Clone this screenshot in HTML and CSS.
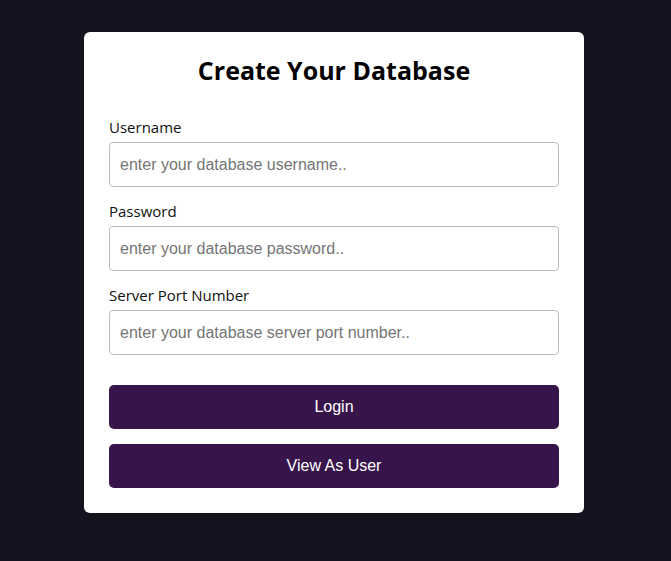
FILE: index.html
```html
<!DOCTYPE html>
<html lang="en">
<head>
<meta charset="utf-8">
<title>Create Your Database</title>
<link rel="stylesheet" href="styles.css">
</head>
<body>
<main class="page">
  <form class="card">
    <h1 class="title">Create Your Database</h1>
    <div class="field">
      <label class="label" for="u">Username</label>
      <input class="input" id="u" type="text" placeholder="enter your database username..">
    </div>
    <div class="field">
      <label class="label" for="p">Password</label>
      <input class="input" id="p" type="password" placeholder="enter your database password..">
    </div>
    <div class="field">
      <label class="label" for="s">Server Port Number</label>
      <input class="input" id="s" type="text" placeholder="enter your database server port number..">
    </div>
    <div class="actions">
      <button class="btn" type="button">Login</button>
      <button class="btn" type="button">View As User</button>
    </div>
  </form>
</main>
</body>
</html>
```
FILE: styles.css
```css
html, body {
  margin: 0;
  padding: 0;
  background: #15131f;
}
.page {
  display: flex;
  justify-content: center;
  padding-top: 32px;
  padding-right: 3px;
  min-height: 561px;
  box-sizing: border-box;
}
.card {
  width: 500px;
  box-sizing: border-box;
  background: #ffffff;
  border-radius: 6px;
  padding: 25px;
  display: flex;
  flex-direction: column;
  height: 481px;
}
.title {
  margin: 0 0 34px 0;
  font-family: "Open Sans", sans-serif;
  font-weight: 700;
  font-size: 25px;
  line-height: 26px;
  text-align: center;
  color: #000;
}
.field {
  display: flex;
  flex-direction: column;
}
.field + .field {
  margin-top: 14px;
}
.label {
  font-family: "Open Sans", sans-serif;
  font-size: 15px;
  line-height: 20px;
  color: #111;
  margin-bottom: 5px;
}
.input {
  height: 45px;
  box-sizing: border-box;
  border: 1px solid #bdbdbd;
  border-radius: 4px;
  padding: 0 10px;
  font-family: "Liberation Sans", Arial, sans-serif;
  font-size: 16px;
  color: #222;
  background: #fff;
  outline: none;
}
.input::placeholder {
  color: #757575;
}
.actions {
  margin-top: 30px;
  display: flex;
  flex-direction: column;
  gap: 15px;
}
.btn {
  height: 44px;
  border: none;
  border-radius: 5px;
  background: #37144a;
  color: #fff;
  font-family: "Liberation Sans", Arial, sans-serif;
  font-size: 16px;
  cursor: pointer;
}
```
